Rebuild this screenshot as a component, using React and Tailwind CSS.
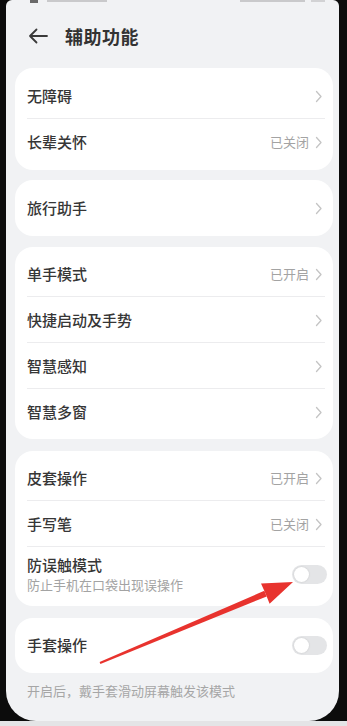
import React from "react";

const font = { fontFamily: '"Noto Sans CJK SC", "Noto Sans", sans-serif' };

function Chevron() {
  return (
    <svg width="8" height="13" viewBox="0 0 8 13" className="ml-[6px]">
      <path d="M1.5 1.5 L6 6.5 L1.5 11.5" fill="none" stroke="#c4c4c4" strokeWidth="1.3" strokeLinecap="round" strokeLinejoin="round" />
    </svg>
  );
}

function Toggle() {
  return (
    <div className="w-[35px] h-[19px] rounded-full bg-[#e4e5e7] flex items-center px-[2px]">
      <div className="w-[15px] h-[15px] rounded-full bg-white shadow-[0_0_2px_rgba(0,0,0,0.15)]" />
    </div>
  );
}

function Row({ title, value, last }) {
  return (
    <div className="relative h-[46px] flex items-center pl-[12px] pr-[10px]">
      <span className="text-[15px] font-medium text-[#363636] flex-1">{title}</span>
      {value && <span className="text-[13px] text-[#a3a3a3]">{value}</span>}
      <Chevron />
      {!last && <div className="absolute bottom-0 left-[12px] right-[8px] h-px bg-[#ececee]" />}
    </div>
  );
}

function Card({ children, className = "" }) {
  return <div className={"bg-white rounded-[18px] " + className}>{children}</div>;
}

export default function App() {
  return (
    <div className="relative w-[347px] h-[726px] bg-[#0c0c0c] overflow-hidden" style={font}>
      <div className="ml-[6px] w-[333px] h-[721px] bg-[#f1f2f4] rounded-b-[30px] rounded-t-[6px] flex flex-col pl-[9px] pr-[6px]">
        {/* status bar remnants */}
        <div className="h-[18px] relative">
          <div className="absolute top-0 left-[15px] w-[8px] h-[3px] bg-[#6a6a6a]" />
          <div className="absolute top-0 left-[32px] w-[60px] h-[2px] bg-[#c9c9cb]" />
          <div className="absolute top-0 left-[225px] w-[65px] h-[2px] bg-[#c9c9cb]" />
          <div className="absolute top-0 left-[296px] w-[14px] h-[2px] bg-[#d2d2d4]" />
        </div>
        {/* header */}
        <div className="h-[36px] flex items-center pl-[13px]">
          <svg width="20" height="16" viewBox="0 0 20 16">
            <path d="M19 8 H2 M8.5 1.5 L2 8 L8.5 14.5" fill="none" stroke="#3a3a3a" strokeWidth="1.8" strokeLinecap="round" strokeLinejoin="round" />
          </svg>
          <span className="ml-[17px] text-[18px] font-bold text-[#333] tracking-[0.5px]">辅助功能</span>
        </div>
        <div className="h-[14px]" />
        <Card className="py-[5px]">
          <Row title="无障碍" />
          <Row title="长辈关怀" value="已关闭" last />
        </Card>
        <Card className="py-[5px] mt-[10px]">
          <Row title="旅行助手" last />
        </Card>
        <Card className="py-[4px] mt-[11px]">
          <Row title="单手模式" value="已开启" />
          <Row title="快捷启动及手势" />
          <Row title="智慧感知" />
          <Row title="智慧多窗" last />
        </Card>
        <Card className="pt-[4px] pb-[4px] mt-[12px]">
          <Row title="皮套操作" value="已开启" />
          <Row title="手写笔" value="已关闭" />
          <div className="h-[55px] flex items-center pl-[12px] pr-[6px]">
            <div className="flex-1 flex flex-col">
              <span className="text-[15px] font-medium text-[#363636] leading-[20px]">防误触模式</span>
              <span className="text-[13px] text-[#a3a3a3] leading-[18px] mt-[1px]">防止手机在口袋出现误操作</span>
            </div>
            <Toggle />
          </div>
        </Card>
        <Card className="mt-[12px] h-[55px] flex items-center pl-[12px] pr-[6px]">
          <span className="flex-1 text-[15px] font-medium text-[#363636]">手套操作</span>
          <Toggle />
        </Card>
        <div className="pl-[12px] pt-[8px] text-[13px] text-[#a6a6a6]">开启后，戴手套滑动屏幕触发该模式</div>
      </div>
      <div className="h-[5px] bg-[#e4e4e6]" />
      {/* red annotation arrow */}
      <svg className="absolute left-0 top-0" width="347" height="726" viewBox="0 0 347 726">
        <polygon points="100.4,664 99.6,662 264.3,590.8 266.7,596.4" fill="#e8332e" />
        <polygon points="293,582 261,583.4 265.5,593.6 269.6,603.8" fill="#e8332e" />
      </svg>
    </div>
  );
}
